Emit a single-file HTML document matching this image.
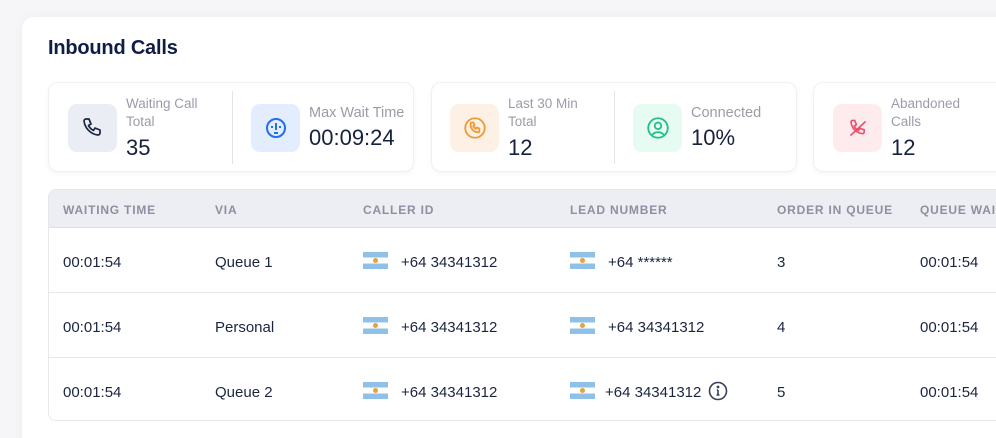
<!DOCTYPE html>
<html style="width:996px;height:438px;overflow:hidden"><head><meta charset="utf-8"><style>
*{margin:0;padding:0;box-sizing:border-box}
body{width:996px;height:438px;overflow:hidden;background:#f6f6f8;font-family:"Liberation Sans",sans-serif;position:relative;color:#1b2540}
.outer{position:absolute;left:22px;top:17px;width:1000px;height:440px;background:#fff;border-radius:12px;box-shadow:0 0 12px rgba(0,0,0,.04)}
h1{position:absolute;left:48px;top:37px;font-size:20px;font-weight:700;color:#0f1d47;letter-spacing:-.2px}
.card{position:absolute;top:82px;height:90px;background:#fff;border:1px solid #eef0f3;border-radius:10px;box-shadow:0 2px 6px rgba(0,0,0,.04)}
.ic{position:absolute;top:21px;width:49px;height:48px;border-radius:9px;display:flex;align-items:center;justify-content:center}
.lbl{position:absolute;font-size:13.5px;color:#9a9ca8;line-height:18px}
.val{position:absolute;font-size:22px;color:#16213f}
.div{position:absolute;top:8px;width:1px;height:73px;background:#e2e4e8}
.tbl{position:absolute;left:48px;top:189px;width:960px;height:232px;border:1px solid #e6e8ec;border-radius:8px;overflow:hidden;background:#fff}
.th{position:absolute;left:0;top:0;width:100%;height:38px;background:#eceef3;border-bottom:1px solid #dcdfe6}
.th span{position:absolute;top:13px;font-size:12px;font-weight:700;color:#8c90a0;letter-spacing:.8px}
.row{position:absolute;left:0;width:100%;height:65px;border-bottom:1px solid #e6e8ec}
.row span{position:absolute;top:26px;font-size:15px;color:#1b2540}
.flag{position:absolute;top:24px;width:25px;height:17px;background:linear-gradient(#8fc1e8 0 33%,#fff 33% 67%,#8fc1e8 67%)}
.flag:after{content:"";position:absolute;left:10px;top:6px;width:5px;height:5px;border-radius:50%;background:#e6a23c}
</style></head><body>
<div class="outer"></div>
<h1>Inbound Calls</h1>

<div class="card" style="left:48px;width:366px">
 <div class="ic" style="left:19px;background:#eaedf4"><svg width="24" height="24" viewBox="0 0 24 24" fill="none" stroke="#1b2540" stroke-width="1.7" stroke-linejoin="round"><path d="M5 3h3l2 5-2.5 1.5a11 11 0 0 0 5 5L14 12l5 2v3a2 2 0 0 1-2 2A16 16 0 0 1 3 5a2 2 0 0 1 2-2z"/></svg></div>
 <div class="lbl" style="left:77px;top:12px">Waiting Call<br>Total</div>
 <div class="val" style="left:77px;top:52px">35</div>
 <div class="div" style="left:183px"></div>
 <div class="ic" style="left:202px;background:#e3edfd"><svg width="24" height="24" viewBox="0 0 24 24" fill="none" stroke="#1f6ff0" stroke-width="2"><circle cx="12" cy="12" r="9"/><path d="M12 7v7M8 10v2M16 10v2M10 17h4"/></svg></div>
 <div class="lbl" style="left:260px;top:21px;font-size:14.5px">Max Wait Time</div>
 <div class="val" style="left:260px;top:42px">00:09:24</div>
</div>

<div class="card" style="left:431px;width:366px">
 <div class="ic" style="left:18px;background:#fdf1e6"><svg width="26" height="26" viewBox="0 0 24 24" fill="none" stroke="#ef9a3a" stroke-width="1.7"><circle cx="12" cy="12" r="9"/><path d="M9 7h1.5l1 2.5-1.2.8a5 5 0 0 0 2.4 2.4l.8-1.2 2.5 1V15a1 1 0 0 1-1 1A7 7 0 0 1 8 8a1 1 0 0 1 1-1z"/></svg></div>
 <div class="lbl" style="left:76px;top:12px">Last 30 Min<br>Total</div>
 <div class="val" style="left:76px;top:52px">12</div>
 <div class="div" style="left:182px"></div>
 <div class="ic" style="left:201px;background:#e6fbf2"><svg width="26" height="26" viewBox="0 0 24 24" fill="none" stroke="#24c08a" stroke-width="1.7"><circle cx="12" cy="12" r="9"/><circle cx="12" cy="10" r="3"/><path d="M6.5 18.5a7 7 0 0 1 11 0"/></svg></div>
 <div class="lbl" style="left:259px;top:21px;font-size:14.5px">Connected</div>
 <div class="val" style="left:259px;top:42px">10%</div>
</div>

<div class="card" style="left:813px;width:220px">
 <div class="ic" style="left:19px;background:#fdebee"><svg width="26" height="26" viewBox="0 0 24 24" fill="none" stroke="#ec4d6a" stroke-width="1.5"><path d="M7 5h2l1.5 4-2 1.2a8 8 0 0 0 4 4l1.2-2 4 1.5v2a1.5 1.5 0 0 1-1.5 1.5A12 12 0 0 1 5.5 6.5 1.5 1.5 0 0 1 7 5z"/><path d="M5 19L19 6"/></svg></div>
 <div class="lbl" style="left:77px;top:12px">Abandoned<br>Calls</div>
 <div class="val" style="left:77px;top:52px">12</div>
</div>

<div class="tbl">
 <div class="th"><span style="left:14px">WAITING TIME</span><span style="left:166px">VIA</span><span style="left:314px">CALLER ID</span><span style="left:521px">LEAD NUMBER</span><span style="left:728px">ORDER IN QUEUE</span><span style="left:871px">QUEUE WAIT</span></div>
 <div class="row" style="top:38px"><span style="left:14px">00:01:54</span><span style="left:166px">Queue 1</span><i class="flag" style="left:314px"></i><span style="left:352px">+64 34341312</span><i class="flag" style="left:521px"></i><span style="left:559px">+64 ******</span><span style="left:728px">3</span><span style="left:871px">00:01:54</span></div>
 <div class="row" style="top:103px"><span style="left:14px">00:01:54</span><span style="left:166px">Personal</span><i class="flag" style="left:314px"></i><span style="left:352px">+64 34341312</span><i class="flag" style="left:521px"></i><span style="left:559px">+64 34341312</span><span style="left:728px">4</span><span style="left:871px">00:01:54</span></div>
 <div class="row" style="top:168px;border:none"><span style="left:14px">00:01:54</span><span style="left:166px">Queue 2</span><i class="flag" style="left:314px"></i><span style="left:352px">+64 34341312</span><i class="flag" style="left:521px"></i><span style="left:556px">+64 34341312</span>
  <svg style="position:absolute;left:659px;top:23px" width="20" height="20" viewBox="0 0 20 20" fill="none" stroke="#3a3f5c" stroke-width="1.6"><circle cx="10" cy="10" r="8.5"/><path d="M10 9v5M8.5 14h3M8.8 9H10"/><circle cx="10" cy="6" r=".6" fill="#3a3f5c"/></svg>
  <span style="left:728px">5</span><span style="left:871px">00:01:54</span></div>
</div>
</body></html>
